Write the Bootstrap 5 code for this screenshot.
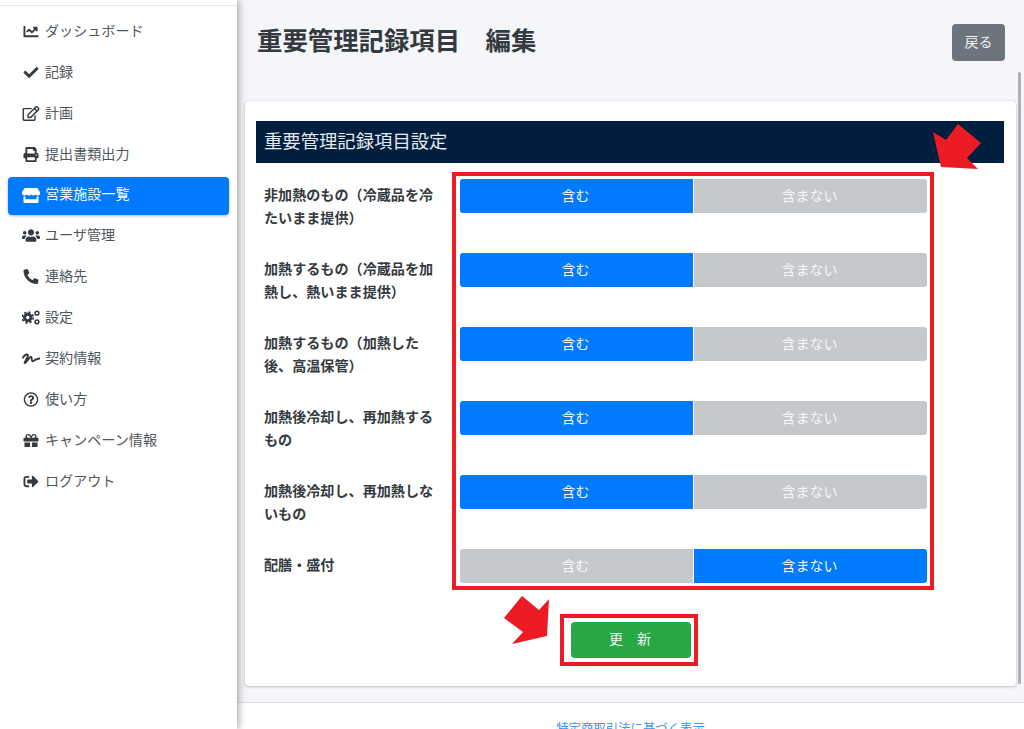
<!DOCTYPE html>
<html lang="ja">
<head>
<meta charset="utf-8">
<title>重要管理記録項目 編集</title>
<link href="https://cdn.jsdelivr.net/npm/bootstrap@5.3.0/dist/css/bootstrap.min.css" rel="stylesheet">
<style>
html,body{height:729px;overflow:hidden}
body{font-family:"Liberation Sans","Noto Sans CJK JP",sans-serif;font-size:14px;background:#f4f6f9;color:#343a40;position:relative}
.shell{height:729px}
.side{width:237px;flex:none;background:#fff;box-shadow:2px 0 7px rgba(0,0,0,.32);padding:5px 8px 0;position:relative;z-index:2}
.side-rule{height:1px;background:#e4e6e8;margin:0 -8px 7px}
.side-link{height:38px;margin-bottom:2.9px;padding-left:14px;padding-bottom:1px;border-radius:4px;color:#50565c;text-decoration:none;gap:5px;font-size:14.1px}
.side-link svg{width:18px;height:15px;fill:#343a40;flex:none}
.side-link.on{background:#007bff;color:#f4f8ff;box-shadow:0 1px 3px rgba(0,0,0,.3)}
.side-link.on svg{fill:#fff}
.main-pane{min-width:0}
.title-row{padding:24px 19px 0 20px;height:96px;margin-bottom:5px}
.page-title{font-size:25.4px;font-weight:700;margin:0;padding-top:1px;line-height:32px;color:#343a40}
.back-btn{width:53px;height:37px;font-size:14px;padding:0;background:#6c757d;color:#eef0f2;border:0;border-radius:4px}
.sheet{margin:0 8px;height:585px;border:0;border-radius:4px;box-shadow:0 0 1px rgba(0,0,0,.2),0 1px 3px rgba(0,0,0,.2);padding:20px 12px 0 11px;position:relative}
.sheet-head{background:#001f3f;color:#e6e9ed;height:42px;font-size:18.35px;padding-left:8px;line-height:42px;margin-bottom:9px}
.labels{width:196px;flex:none;padding:7px 8px 0}
.label-cell{height:74px;font-size:14.1px;font-weight:700;line-height:23px;padding-top:5px;color:#343a40}
.label-cell:last-child{height:34px}
.red-frame{width:482px;border:4px solid #ed1c24;padding:3px 3px 3px 4px}
.choice{height:34px;margin-bottom:40px;gap:1px}
.choice:last-child{margin-bottom:0}
.choice .btn{padding:0 2px 0 0;font-size:14px;border:0;height:34px;line-height:33px;flex:1 1 0;color:#f4f6f8}
.c-on{background:#007bff}
.c-off{background:#c6c9cc}
.choice .btn:first-child{border-radius:3px 0 0 3px}
.choice .btn:last-child{border-radius:0 3px 3px 0}
.save-frame{width:138px;height:52px;border:4px solid #ed1c24;margin:24px 0 0 304px;padding:4px 7px}
.save-btn{width:120px;height:36px;padding:0 2px 2px 0;background:#28a745;color:#eef6f0;border:0;border-radius:4px;font-size:14px}
.foot-band{margin-top:16px;height:40px;background:#fff;border-top:1px solid #dee2e6;text-align:center;padding-top:15px}
.foot-band a{color:#3d97f5;text-decoration:none;font-size:12.4px}
.rail{position:absolute;left:1018px;top:72px;width:3px;height:612px;background:#b0b0b6;border-radius:2px;z-index:3}
.marks{position:absolute;left:0;top:0;width:1024px;height:729px;z-index:4;pointer-events:none}
</style>
</head>
<body>
<div class="shell d-flex">
  <nav class="side d-flex flex-column">
    <div class="side-rule"></div>
    <a class="side-link d-flex align-items-center" href="#"><svg viewBox="0 0 512 512"><path d="M496 384H64V80c0-8.84-7.16-16-16-16H16C7.16 64 0 71.16 0 80v336c0 17.67 14.33 32 32 32h464c8.84 0 16-7.16 16-16v-32c0-8.84-7.16-16-16-16zM464 96H345.94c-21.38 0-32.09 25.85-16.97 40.97l32.4 32.4L288 242.75l-73.37-73.37c-12.5-12.5-32.76-12.5-45.25 0l-68.69 68.69c-6.25 6.25-6.25 16.38 0 22.63l22.62 22.62c6.25 6.25 16.38 6.25 22.63 0L192 237.25l73.37 73.37c12.5 12.5 32.76 12.5 45.25 0l96-96 32.4 32.4c15.12 15.12 40.97 4.41 40.97-16.97V112c.01-8.84-7.15-16-15.99-16z"/></svg>ダッシュボード</a>
    <a class="side-link d-flex align-items-center" href="#"><svg viewBox="0 0 512 512"><path d="M173.898 439.404l-166.4-166.4c-9.997-9.997-9.997-26.206 0-36.204l36.203-36.204c9.997-9.998 26.207-9.998 36.204 0L192 312.69 432.095 72.596c9.997-9.997 26.207-9.997 36.204 0l36.203 36.204c9.997 9.997 9.997 26.206 0 36.204l-294.4 294.401c-9.998 9.997-26.207 9.997-36.204-.001z"/></svg>記録</a>
    <a class="side-link d-flex align-items-center" href="#"><svg viewBox="0 0 576 512"><path d="M402.3 344.9l32-32c5-5 13.7-1.5 13.7 5.7V464c0 26.5-21.5 48-48 48H48c-26.5 0-48-21.5-48-48V112c0-26.5 21.5-48 48-48h273.5c7.1 0 10.7 8.6 5.7 13.7l-32 32c-1.5 1.5-3.5 2.3-5.7 2.3H48v352h352V350.5c0-2.1.8-4.1 2.3-5.6zm156.6-201.8L296.3 405.7l-90.4 10c-26.2 2.9-48.5-19.2-45.6-45.6l10-90.4L432.9 17.1c22.9-22.9 59.9-22.9 82.7 0l43.2 43.2c22.9 22.9 22.9 60 .1 82.8zM460.1 174L402 115.9 216.2 301.8l-7.3 65.3 65.3-7.3L460.1 174zm64.8-79.7l-43.2-43.2c-4.1-4.1-10.8-4.1-14.8 0L436 82l58.1 58.1 30.9-30.9c4-4.2 4-10.8-.1-14.9z"/></svg>計画</a>
    <a class="side-link d-flex align-items-center" href="#"><svg viewBox="0 0 512 512"><path d="M448 192V77.25c0-8.49-3.37-16.62-9.37-22.63L393.37 9.37c-6-6-14.14-9.37-22.63-9.37H96C78.33 0 64 14.33 64 32v160c-35.35 0-64 28.65-64 64v112c0 8.84 7.16 16 16 16h48v96c0 17.67 14.33 32 32 32h320c17.67 0 32-14.33 32-32v-96h48c8.84 0 16-7.16 16-16V256c0-35.35-28.65-64-64-64zm-64 256H128v-96h256v96zm0-224H128V64h192v48c0 8.84 7.16 16 16 16h48v96zm48 72c-13.25 0-24-10.75-24-24 0-13.26 10.75-24 24-24s24 10.74 24 24c0 13.25-10.75 24-24 24z"/></svg>提出書類出力</a>
    <a class="side-link on d-flex align-items-center" href="#"><svg viewBox="0 0 616 512"><path d="M602 118.6L537.1 15C531.3 5.7 521 0 510 0H106C95 0 84.7 5.7 78.9 15L14 118.6c-33.9 54.1-3.9 129.3 59.4 137.9 4.6.6 9.2.9 13.9.9 29.9 0 56.4-13.2 74.6-33.6 18.2 20.4 44.8 33.6 74.6 33.6 29.9 0 56.4-13.2 74.6-33.6 18.2 20.4 44.8 33.6 74.6 33.6 29.9 0 56.4-13.2 74.6-33.6 18.2 20.4 44.8 33.6 74.6 33.6 4.8 0 9.3-.3 13.9-.9 63.5-8.5 93.6-83.7 59.6-137.9zM529.5 288c-10 0-19.9-1.5-29.5-3.8V384H116v-99.8c-9.6 2.2-19.5 3.8-29.5 3.8-6 0-12.1-.4-18-1.2-5.6-.8-11.1-2.1-16.4-3.6V480c0 17.7 14.3 32 32 32h448c17.7 0 32-14.3 32-32V283.2c-5.4 1.6-10.8 2.9-16.4 3.6-6.1.8-12.1 1.2-18.2 1.2z"/></svg>営業施設一覧</a>
    <a class="side-link d-flex align-items-center" href="#"><svg viewBox="0 0 640 512"><path d="M96 224c35.3 0 64-28.7 64-64s-28.7-64-64-64-64 28.7-64 64 28.7 64 64 64zm448 0c35.3 0 64-28.7 64-64s-28.7-64-64-64-64 28.7-64 64 28.7 64 64 64zm32 32h-64c-17.6 0-33.5 7.1-45.1 18.6 40.3 22.1 68.9 62 75.1 109.4h66c17.7 0 32-14.3 32-32v-32c0-35.3-28.7-64-64-64zm-256 0c61.9 0 112-50.1 112-112S381.9 32 320 32 208 82.1 208 144s50.1 112 112 112zm76.8 32h-8.3c-20.8 10-43.9 16-68.5 16s-47.6-6-68.5-16h-8.3C179.6 288 128 339.6 128 403.2V432c0 26.5 21.5 48 48 48h288c26.5 0 48-21.5 48-48v-28.8c0-63.6-51.6-115.2-115.2-115.2zm-223.7-13.4C161.5 263.1 145.6 256 128 256H64c-35.3 0-64 28.7-64 64v32c0 17.7 14.3 32 32 32h65.9c6.3-47.4 34.9-87.3 75.2-109.4z"/></svg>ユーザ管理</a>
    <a class="side-link d-flex align-items-center" href="#"><svg viewBox="0 0 512 512"><path d="M497.39 361.8l-112-48a24 24 0 0 0-28 6.9l-49.6 60.6A370.66 370.66 0 0 1 130.6 204.11l60.6-49.6a23.94 23.94 0 0 0 6.9-28l-48-112A24.16 24.16 0 0 0 122.6.61l-104 24A24 24 0 0 0 0 48c0 256.5 207.9 464 464 464a24 24 0 0 0 23.4-18.6l24-104a24.29 24.29 0 0 0-14.01-27.6z"/></svg>連絡先</a>
    <a class="side-link d-flex align-items-center" href="#"><svg viewBox="0 0 20 16"><circle cx="6.4" cy="8" r="3.600" fill="none" stroke="#343a40" stroke-width="3.400"/><circle cx="6.400" cy="8" r="6" fill="none" stroke="#343a40" stroke-width="1.900" stroke-dasharray="2.500 2.200"/><circle cx="16.600" cy="3.200" r="2.100" fill="none" stroke="#343a40" stroke-width="1.700"/><circle cx="16.600" cy="12.800" r="2.100" fill="none" stroke="#343a40" stroke-width="1.700"/></svg>設定</a>
    <a class="side-link d-flex align-items-center" href="#"><svg viewBox="0 0 20 16"><path d="M1 7C3 3.500 7 2 6.500 5 6 8 2 13 3 13 5 13 8 6 10 6 11.500 6 10 11 12 11 14 11 15 8.500 17 8.500L19.500 8" fill="none" stroke="#343a40" stroke-width="2.100" stroke-linecap="round" stroke-linejoin="round"/></svg>契約情報</a>
    <a class="side-link d-flex align-items-center" href="#"><svg viewBox="0 0 512 512"><path d="M256 8C119.043 8 8 119.083 8 256c0 136.997 111.043 248 248 248s248-111.003 248-248C504 119.083 392.957 8 256 8zm0 448c-110.532 0-200-89.431-200-200 0-110.495 89.472-200 200-200 110.491 0 200 89.471 200 200 0 110.53-89.431 200-200 200zm107.244-255.2c0 67.052-72.421 68.084-72.421 92.863V300c0 6.627-5.373 12-12 12h-45.647c-6.627 0-12-5.373-12-12v-8.659c0-35.745 27.1-50.034 47.579-61.516 17.561-9.845 28.324-16.541 28.324-29.579 0-17.246-21.999-28.693-39.784-28.693-23.189 0-33.894 10.977-48.942 29.969-4.057 5.12-11.46 6.071-16.666 2.124l-27.824-21.098c-5.107-3.872-6.251-11.066-2.644-16.363C184.846 131.491 214.94 112 261.794 112c49.071 0 101.45 38.304 101.45 88.8zM298 368c0 23.159-18.841 42-42 42s-42-18.841-42-42 18.841-42 42-42 42 18.841 42 42z"/></svg>使い方</a>
    <a class="side-link d-flex align-items-center" href="#"><svg viewBox="0 0 512 512"><path d="M32 448c0 17.7 14.3 32 32 32h160V320H32v128zm256 32h160c17.7 0 32-14.3 32-32V320H288v160zm192-320h-42.1c6.2-12.1 10.1-25.5 10.1-40 0-48.5-39.5-88-88-88-41.6 0-68.5 21.3-103 68.3-34.5-47-61.4-68.3-103-68.3-48.5 0-88 39.5-88 88 0 14.5 3.8 27.9 10.1 40H32c-17.7 0-32 14.3-32 32v80c0 8.8 7.2 16 16 16h480c8.8 0 16-7.2 16-16v-80c0-17.7-14.3-32-32-32zm-326.1 0c-22.1 0-40-17.9-40-40s17.9-40 40-40c19.9 0 34.6 3.3 86.1 80h-86.1zm206.1 0h-86.1c51.4-76.5 65.7-80 86.1-80 22.1 0 40 17.9 40 40s-17.9 40-40 40z"/></svg>キャンペーン情報</a>
    <a class="side-link d-flex align-items-center" href="#"><svg viewBox="0 0 512 512"><path d="M497 273L329 441c-15 15-41 4.500-41-17v-96H152c-13.300 0-24-10.700-24-24v-96c0-13.300 10.700-24 24-24h136V88c0-21.400 25.900-32 41-17l168 168c9.300 9.400 9.300 24.600 0 34zM192 436v-40c0-6.600-5.400-12-12-12H96c-17.700 0-32-14.300-32-32V160c0-17.700 14.300-32 32-32h84c6.600 0 12-5.400 12-12V76c0-6.600-5.400-12-12-12H96c-53 0-96 43-96 96v192c0 53 43 96 96 96h84c6.600 0 12-5.400 12-12z"/></svg>ログアウト</a>
  </nav>
  <main class="main-pane flex-grow-1">
    <div class="title-row d-flex justify-content-between align-items-start">
      <h1 class="page-title">重要管理記録項目　編集</h1>
      <button class="btn back-btn" type="button">戻る</button>
    </div>
    <section class="card sheet">
      <div class="sheet-head">重要管理記録項目設定</div>
      <div class="d-flex">
        <div class="labels">
          <div class="label-cell">非加熱のもの（冷蔵品を冷たいまま提供）</div>
          <div class="label-cell">加熱するもの（冷蔵品を加熱し、熱いまま提供）</div>
          <div class="label-cell">加熱するもの（加熱した後、高温保管）</div>
          <div class="label-cell">加熱後冷却し、再加熱するもの</div>
          <div class="label-cell">加熱後冷却し、再加熱しないもの</div>
          <div class="label-cell">配膳・盛付</div>
        </div>
        <div class="red-frame">
          <div class="choice d-flex"><button class="btn c-on" type="button">含む</button><button class="btn c-off" type="button">含まない</button></div>
          <div class="choice d-flex"><button class="btn c-on" type="button">含む</button><button class="btn c-off" type="button">含まない</button></div>
          <div class="choice d-flex"><button class="btn c-on" type="button">含む</button><button class="btn c-off" type="button">含まない</button></div>
          <div class="choice d-flex"><button class="btn c-on" type="button">含む</button><button class="btn c-off" type="button">含まない</button></div>
          <div class="choice d-flex"><button class="btn c-on" type="button">含む</button><button class="btn c-off" type="button">含まない</button></div>
          <div class="choice d-flex"><button class="btn c-off" type="button">含む</button><button class="btn c-on" type="button">含まない</button></div>
        </div>
      </div>
      <div class="save-frame"><button class="btn save-btn" type="button">更　新</button></div>
    </section>
    <footer class="foot-band"><a href="#">特定商取引法に基づく表示</a></footer>
  </main>
</div>
<div class="rail"></div>
<svg class="marks" viewBox="0 0 1024 729"><polygon fill="#ed1c24" points="933,132 946,140 958,124 981,143 967,158 978,169 941,167"/><polygon fill="#ed1c24" points="522,596 539,610 549,599 547,636 512,644 523,632 504,618"/></svg>
</body>
</html>
